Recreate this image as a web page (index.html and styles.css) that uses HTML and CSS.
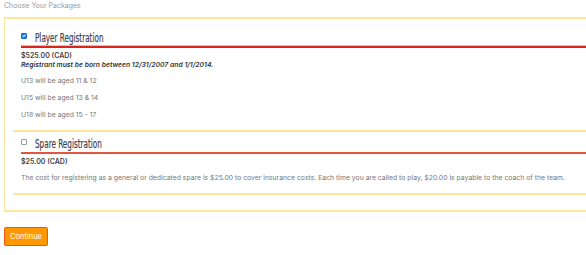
FILE: index.html
```html
<!DOCTYPE html>
<html lang="en">
<head>
    <meta charset="UTF-8">
    <meta name="viewport" content="width=device-width, initial-scale=1.0">
    <title>Choose Your Packages</title>
    <link rel="stylesheet" href="styles.css">
</head>
<body>
    <div class="page">
        <div class="section-label">Choose Your Packages</div>

        <div class="packages">
            <div class="package">
                <label class="package-head selected">
                    <input type="checkbox" checked>
                    <span class="package-title">Player Registration</span>
                </label>
                <div class="price">$525.00 (CAD)</div>
                <div class="note">Registrant must be born between 12/31/2007 and 1/1/2014.</div>
                <p>U13 will be aged 11 &amp; 12</p>
                <p>U15 will be aged 13 &amp; 14</p>
                <p>U18 will be aged 15 - 17</p>
            </div>

            <div class="package">
                <label class="package-head">
                    <input type="checkbox">
                    <span class="package-title">Spare Registration</span>
                </label>
                <div class="price">$25.00 (CAD)</div>
                <p>The cost for registering as a general or dedicated spare is $25.00 to cover insurance costs. Each time you are called to play, $20.00 is payable to the coach of the team.</p>
            </div>
        </div>

        <button class="btn">Continue</button>
    </div>
</body>
</html>
```

FILE: styles.css
```css
body {
    font-family: 'Inter', 'Open Sans', sans-serif;
    margin: 0;
    padding: 0;
    color: #555;
    background: #fff;
    overflow: hidden;
}

.page {
    padding-left: 4px;
}

.section-label {
    font-size: 7px;
    color: #9a9a9a;
    height: 17px;
    line-height: 12px;
}

.packages {
    border: 1px solid #fce7a0;
    border-top-width: 2px;
    border-bottom-width: 2px;
    border-right: none;
    padding: 7px 0 15px 8px;
}

.package {
    border-bottom: 2px solid #fce49a;
    padding: 4px 0 10px 8px;
}

.package-head {
    display: flex;
    align-items: center;
    border-bottom: 2px solid #e2553f;
    height: 16px;
}

.package-head.selected {
    border-bottom-color: #d8261c;
    box-shadow: 0 -1px 0 #f6b3ae inset;
}

.package-head input {
    appearance: none;
    box-sizing: border-box;
    width: 6px;
    height: 6px;
    margin: 0 8px 4px 0;
    border: 1px solid #9a9a9a;
    border-radius: 1px;
    background: #fff;
}

.package-head input:checked {
    background: #1a6fe0;
    border-color: #1a6fe0;
    position: relative;
}

.package-head input:checked::after {
    content: "";
    position: absolute;
    left: 1px;
    top: 0;
    width: 1px;
    height: 2px;
    border: solid #fff;
    border-width: 0 1px 1px 0;
    transform: rotate(45deg);
}

.package-title {
    font-family: 'DejaVu Sans', sans-serif;
    font-stretch: condensed;
    font-size: 11.5px;
    color: #3f3f4f;
    display: inline-block;
    transform: scaleX(0.7);
    transform-origin: left center;
    white-space: nowrap;
    -webkit-text-stroke: 0.2px #3f3f4f;
}

.price {
    font-size: 7px;
    font-weight: 600;
    color: #444;
    margin-top: 3px;
    line-height: 9px;
}

.note {
    font-size: 6.8px;
    font-weight: 600;
    font-style: italic;
    color: #333;
    line-height: 9px;
}

p {
    font-size: 6.85px;
    color: #777;
    margin: 6px 0 0;
    line-height: 11px;
}

.btn {
    display: block;
    margin-top: 15px;
    background-color: #ff9800;
    color: #fff;
    border: 1px solid #f4511e;
    border-radius: 2px;
    font-family: 'Inter', sans-serif;
    font-size: 7.5px;
    padding: 0;
    height: 19px;
    width: 44px;
    cursor: pointer;
}
```
